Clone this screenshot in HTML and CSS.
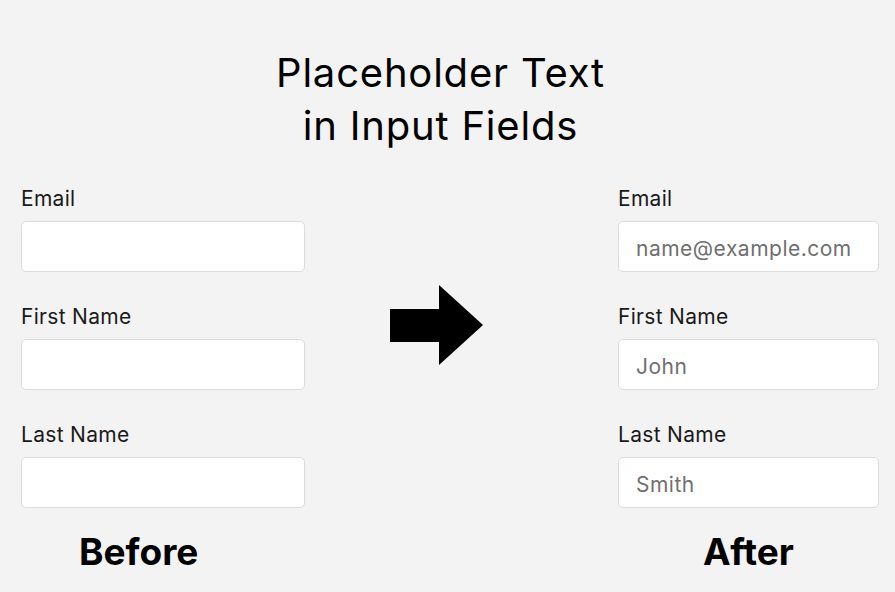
FILE: index.html
```html
<!DOCTYPE html>
<html lang="en">
<head>
<meta charset="utf-8">
<title>Placeholder Text in Input Fields</title>
<link rel="stylesheet" href="styles.css">
</head>
<body>
<main class="page">
  <h1 class="title">Placeholder Text<br>in Input Fields</h1>
  <div class="compare">
    <section class="panel panel-before">
      <div class="field">
        <label class="label">Email</label>
        <input class="input" type="text">
      </div>
      <div class="field">
        <label class="label">First Name</label>
        <input class="input" type="text">
      </div>
      <div class="field">
        <label class="label">Last Name</label>
        <input class="input" type="text">
      </div>
      <p class="caption caption-before">Before</p>
    </section>
    <div class="arrow">
      <svg width="93" height="80" viewBox="0 0 93 80"><polygon points="0,24 49,24 49,0 93,40 49,80 49,57 0,57" fill="#000"/></svg>
    </div>
    <section class="panel panel-after">
      <div class="field">
        <label class="label">Email</label>
        <input class="input" type="text" placeholder="name@example.com">
      </div>
      <div class="field">
        <label class="label">First Name</label>
        <input class="input" type="text" placeholder="John">
      </div>
      <div class="field">
        <label class="label">Last Name</label>
        <input class="input" type="text" placeholder="Smith">
      </div>
      <p class="caption caption-after">After</p>
    </section>
  </div>
</main>
</body>
</html>
```
FILE: styles.css
```css
html, body {
  margin: 0;
  padding: 0;
  background: #f3f3f3;
}
body {
  font-family: Inter, "Noto Sans", sans-serif;
  color: #111;
  width: 895px;
  height: 592px;
  overflow: hidden;
}
.page {
  padding-top: 46px;
}
.title {
  margin: 0;
  padding-right: 14px;
  text-align: center;
  font-size: 40px;
  line-height: 53px;
  font-weight: 400;
  letter-spacing: 0.8px;
  color: #000;
}
.compare {
  display: flex;
  align-items: flex-start;
  padding-left: 21px;
  margin-top: 35px;
}
.panel {
  display: flex;
  flex-direction: column;
}
.panel-before {
  width: 284px;
}
.panel-after {
  width: 261px;
  margin-left: 135px;
}
.field {
  display: flex;
  flex-direction: column;
  margin-bottom: 33px;
}
.field:nth-child(3) {
  margin-bottom: 22px;
}
.label {
  font-size: 21px;
  line-height: 24px;
  letter-spacing: 0.3px;
  margin-bottom: 10px;
  color: #1a1a1a;
}
.input {
  box-sizing: border-box;
  height: 51px;
  width: 100%;
  margin: 0;
  border: 1px solid #dcdcdc;
  border-radius: 5px;
  background: #fff;
  padding: 3px 17px 0;
  font-family: Inter, "Noto Sans", sans-serif;
  font-size: 21px;
  letter-spacing: 0.5px;
  color: #111;
  outline: none;
}
.input::placeholder {
  color: #6f6f6f;
  opacity: 1;
}
.arrow {
  margin-left: 85px;
  margin-top: 98px;
  display: flex;
}
.caption {
  margin: 0;
  font-size: 37px;
  line-height: 44px;
  font-weight: 700;
  color: #000;
}
.caption-before {
  padding-left: 58px;
}
.caption-after {
  text-align: center;
}
```
